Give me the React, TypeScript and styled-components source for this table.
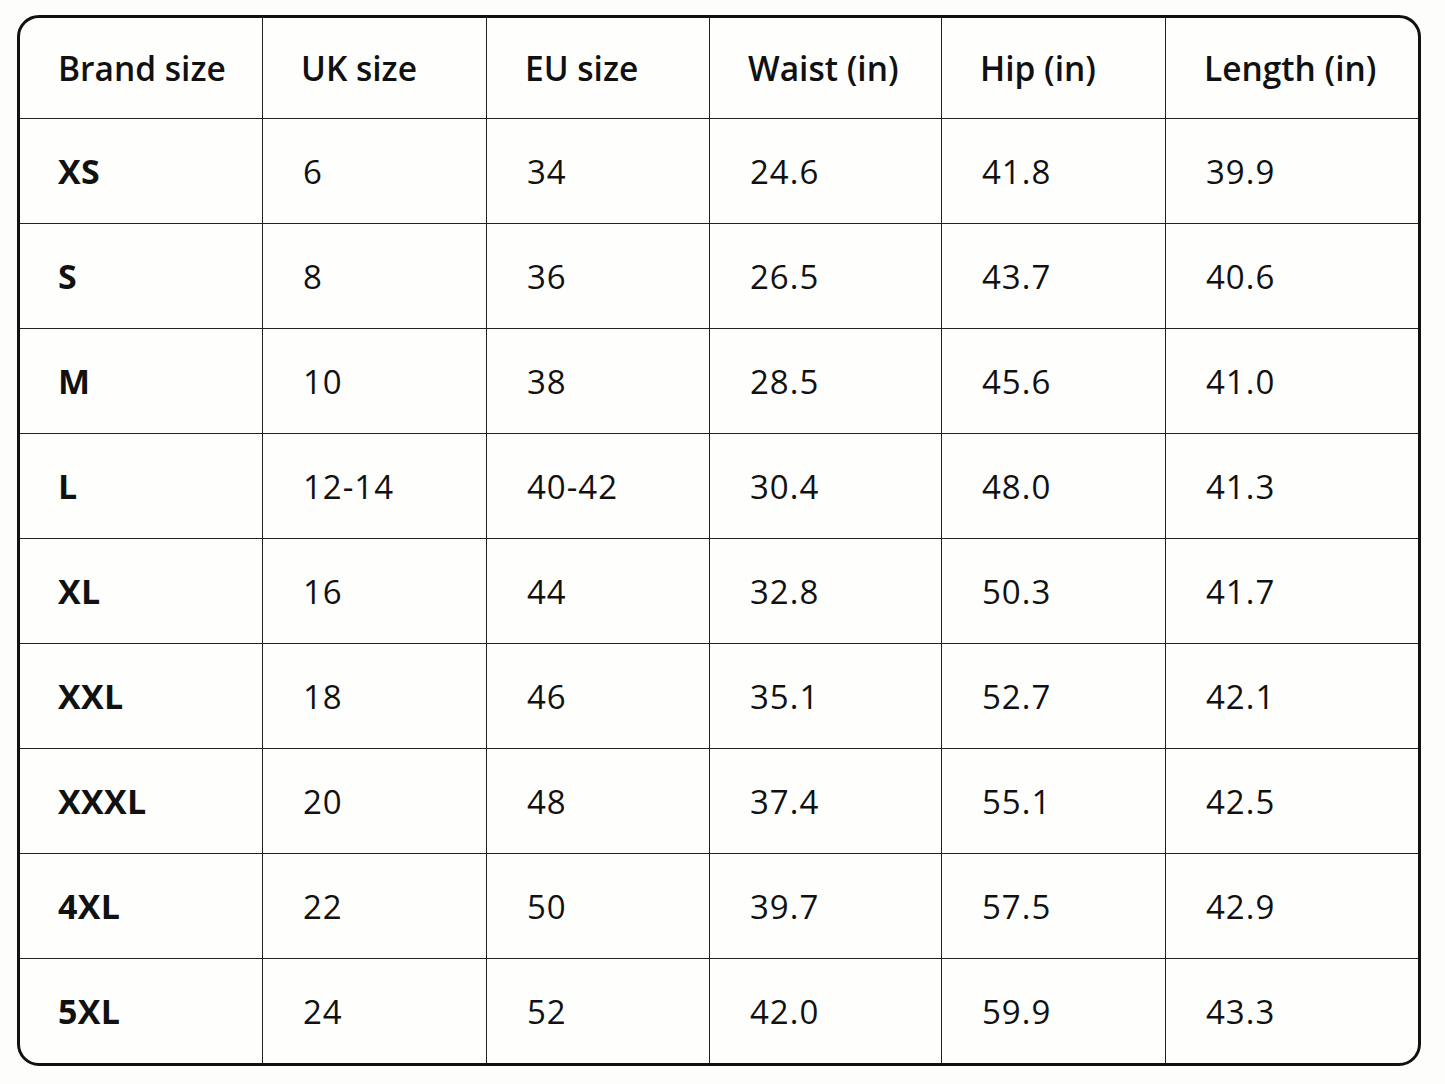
import React from 'react';
import styled, { createGlobalStyle } from 'styled-components';

const GlobalStyle = createGlobalStyle`
  html, body {
    margin: 0;
    padding: 0;
    background: #fdfdfb;
  }
  body {
    font-family: 'Open Sans', 'Noto Sans', 'Liberation Sans', sans-serif;
    color: #111;
  }
`;

const headers = ['Brand size', 'UK size', 'EU size', 'Waist (in)', 'Hip (in)', 'Length (in)'];

const rows: string[][] = [
  ['XS', '6', '34', '24.6', '41.8', '39.9'],
  ['S', '8', '36', '26.5', '43.7', '40.6'],
  ['M', '10', '38', '28.5', '45.6', '41.0'],
  ['L', '12-14', '40-42', '30.4', '48.0', '41.3'],
  ['XL', '16', '44', '32.8', '50.3', '41.7'],
  ['XXL', '18', '46', '35.1', '52.7', '42.1'],
  ['XXXL', '20', '48', '37.4', '55.1', '42.5'],
  ['4XL', '22', '50', '39.7', '57.5', '42.9'],
  ['5XL', '24', '52', '42.0', '59.9', '43.3'],
];

type Kind = 'head' | 'size' | 'value';

const fontSize: Record<Kind, string> = { head: '33.5px', size: '34px', value: '33px' };
const fontWeight: Record<Kind, number> = { head: 600, size: 700, value: 400 };
const tracking: Record<Kind, string> = { head: '0', size: '0.01em', value: '0.03em' };

const Page = styled.div`
  padding: 15px 0 0 17px;
`;

const Chart = styled.div`
  width: 1404px;
  height: 1051px;
  box-sizing: border-box;
  border: 3px solid #111;
  border-radius: 22px;
  overflow: hidden;
  background: #fefefd;
  display: grid;
  grid-template-columns: 243px 224px 223px 232px 224px 1fr;
  grid-template-rows: 101px repeat(8, 105px) 1fr;
`;

const Cell = styled.div<{ $lastCol: boolean; $lastRow: boolean; $kind: Kind }>`
  display: flex;
  align-items: center;
  padding-left: ${(p) => (p.$kind === 'value' ? 40 : 38)}px;
  border-right: ${(p) => (p.$lastCol ? 'none' : '1.5px solid #222')};
  border-bottom: ${(p) => (p.$lastRow ? 'none' : '1.5px solid #222')};
  font-size: ${(p) => fontSize[p.$kind]};
  font-weight: ${(p) => fontWeight[p.$kind]};
  letter-spacing: ${(p) => tracking[p.$kind]};
  white-space: nowrap;
`;

export default function App() {
  return (
    <>
      <GlobalStyle />
      <Page>
        <Chart>
          {headers.map((h, i) => (
            <Cell key={h} $kind="head" $lastCol={i === headers.length - 1} $lastRow={false}>
              {h}
            </Cell>
          ))}
          {rows.map((row, r) =>
            row.map((v, c) => (
              <Cell
                key={`${r}-${c}`}
                $kind={c === 0 ? 'size' : 'value'}
                $lastCol={c === row.length - 1}
                $lastRow={r === rows.length - 1}
              >
                {v}
              </Cell>
            )),
          )}
        </Chart>
      </Page>
    </>
  );
}
